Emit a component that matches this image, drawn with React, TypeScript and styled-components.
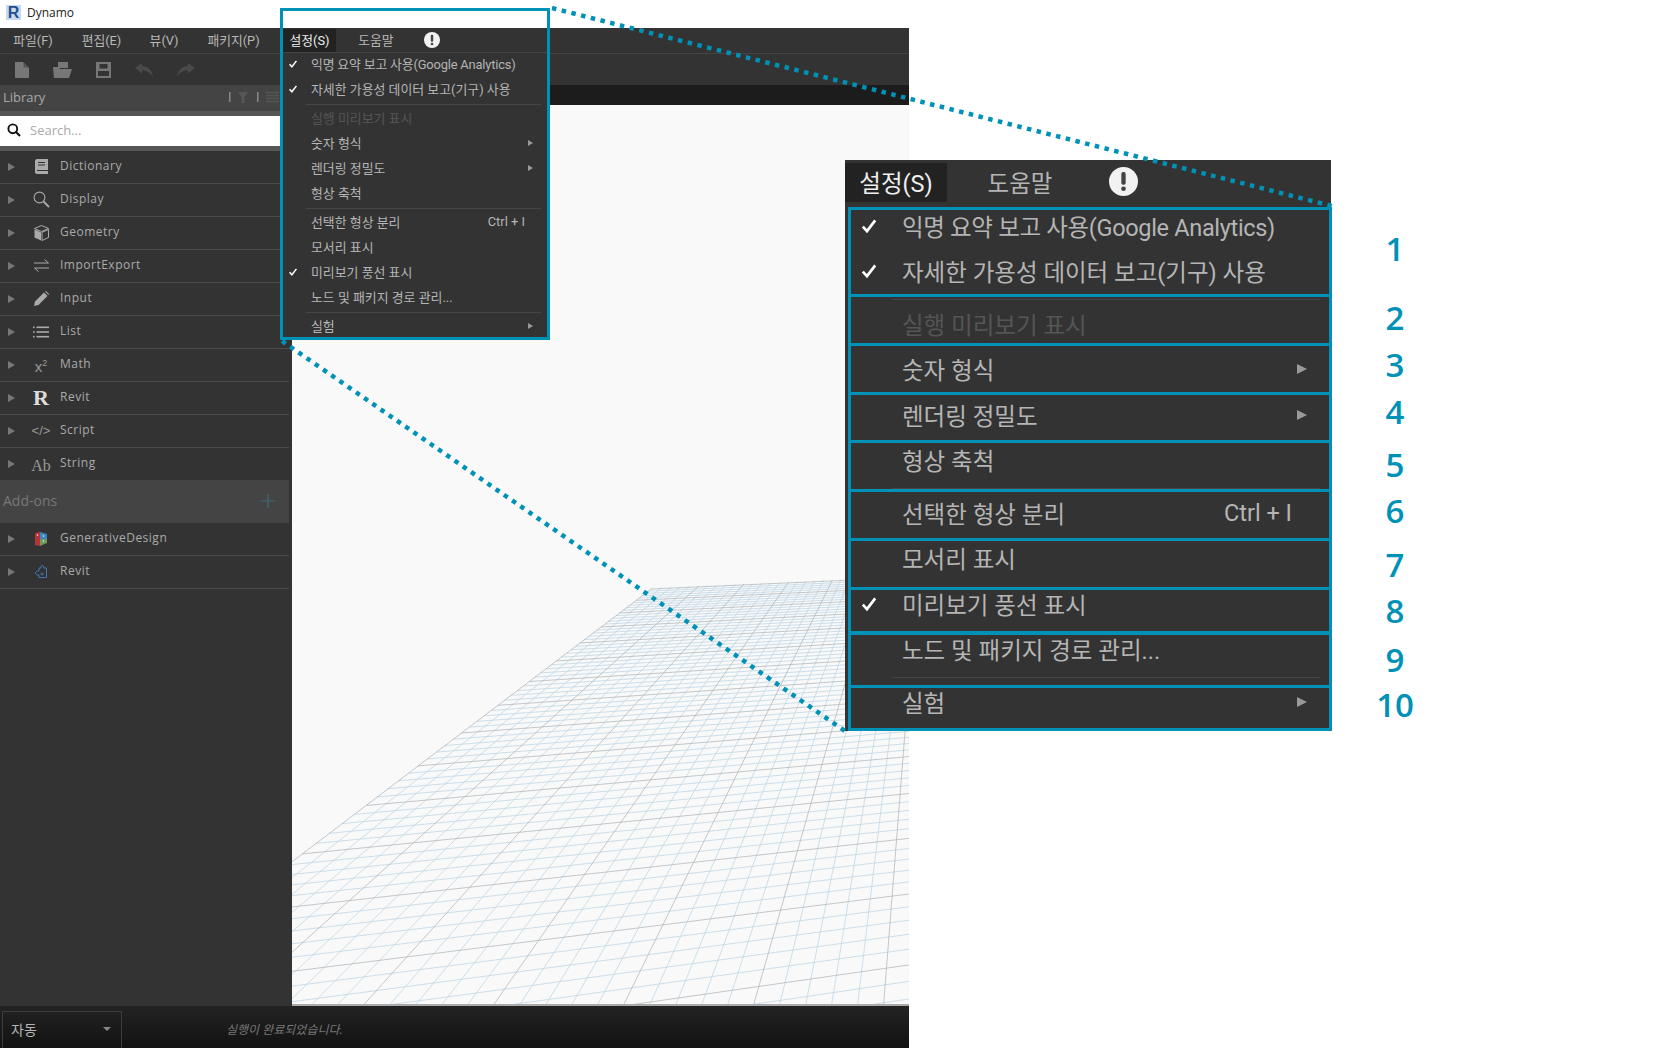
import React from "react";
import styled, { createGlobalStyle, css } from "styled-components";

const UI_FONT = `"Open Sans", "Noto Sans CJK KR", sans-serif`;
const MENU_FONT = `Roboto, "Noto Sans CJK KR", sans-serif`;
const ACCENT = "#0091b7";

const Global = createGlobalStyle`
  html, body { margin: 0; padding: 0; background: #fff; }
  * { box-sizing: border-box; }
`;

const Page = styled.div`
  position: relative;
  width: 1676px;
  height: 1048px;
  overflow: hidden;
  background: #fff;
  font-family: ${UI_FONT};
`;
const AppWindow = styled.div`
  display: flex;
  flex-direction: column;
  width: 909px;
  height: 1048px;
`;
const TitleBar = styled.div`
  display: flex;
  align-items: center;
  gap: 6px;
  height: 28px;
  padding: 0 0 3px 6px;
  background: #fff;
  color: #222;
  font-size: 12px;
`;
const LogoMark = styled.span`
  display: flex;
  align-items: center;
  justify-content: center;
  width: 15px;
  height: 15px;
  background: #c9d8ea;
  color: #1f4f94;
  font: 700 16px/15px "Liberation Sans", sans-serif;
`;
const MenuBar = styled.div`
  display: flex;
  align-items: center;
  height: 26px;
  background: #333;
  border-bottom: 1px solid #444;
  color: #b8b8b8;
  font: 12.8px ${MENU_FONT};
`;
const MenuEntry = styled.span<{ $w: number; $active?: boolean }>`
  display: flex;
  align-items: center;
  justify-content: center;
  width: ${(p) => p.$w}px;
  height: 23px;
  padding-bottom: 2px;
  ${(p) => p.$active && css`background: #222; color: #eee;`}
`;
const Toolbar = styled.div`
  display: flex;
  align-items: center;
  height: 31px;
  padding-left: 15px;
  gap: 24px;
  background: #333;
`;
const Workspace = styled.div`
  display: flex;
  flex: 1;
  min-height: 0;
`;
const Sidebar = styled.aside`
  width: 292px;
  background: #333;
  display: flex;
  flex-direction: column;
  padding-right: 3px;
`;
const LibraryHeader = styled.div`
  display: flex;
  align-items: center;
  height: 26px;
  padding: 0 10px 2px 3px;
  background: #444;
  color: #a8a8a8;
  font-size: 13px;
`;
const LibraryTitle = styled.span`
  flex: 1;
`;
const SearchWell = styled.div`
  padding: 5px 0;
  background: #575757;
`;
const SearchBox = styled.div`
  display: flex;
  align-items: center;
  height: 30px;
  gap: 9px;
  padding: 0 0 2px 7px;
  background: #fff;
  color: #aaa;
  font-size: 13px;
`;
const LibraryRow = styled.div`
  display: flex;
  align-items: center;
  height: 33px;
  padding-bottom: 3px;
  border-bottom: 1px solid #4b4b4b;
  color: #aaa;
  font-size: 12px;
  letter-spacing: 0.5px;
`;
const RowArrow = styled.span`
  width: 0;
  height: 0;
  margin: 2px 0 0 8px;
  border-left: 7px solid #777;
  border-top: 4.5px solid transparent;
  border-bottom: 4.5px solid transparent;
`;
const RowIcon = styled.span`
  display: flex;
  align-items: center;
  justify-content: center;
  width: 20px;
  height: 20px;
  margin: 2px 9px 0 16px;
  color: #aaa;
  letter-spacing: 0;
`;
const MathGlyph = styled.span`
  font: 15px "Liberation Sans", sans-serif;
  color: #999;
  padding-top: 3px;
  sup { font-size: 9px; line-height: 0; }
`;
const RevitGlyph = styled.span`
  font: 700 22px/20px "Liberation Serif", serif;
  color: #ddd;
`;
const ScriptGlyph = styled.span`
  font: 13px "Liberation Sans", sans-serif;
  color: #999;
  white-space: nowrap;
`;
const StringGlyph = styled.span`
  font: 16px "Liberation Serif", serif;
  color: #999;
  padding-top: 4px;
`;
const AddOnsHeader = styled.div`
  display: flex;
  align-items: center;
  justify-content: space-between;
  height: 43px;
  padding: 0 14px 2px 3px;
  margin-top: -1px;
  background: #444;
  color: #777;
  font-size: 14px;
`;
const Stage = styled.main`
  flex: 1;
  display: flex;
  flex-direction: column;
`;
const TabStrip = styled.div`
  height: 20px;
  background: #1c1c1c;
`;
const Viewport = styled.div`
  flex: 1;
  min-height: 0;
  background: #f9f9f9;
  border-bottom: 2px solid #aaa;
`;
const GridSvg = styled.svg`
  display: block;
  width: 100%;
  height: 100%;
`;
const StatusBar = styled.footer`
  display: flex;
  align-items: flex-end;
  height: 42px;
  padding-left: 2px;
  background: linear-gradient(#232323, #121212);
`;
const RunSelect = styled.div`
  display: flex;
  align-items: center;
  justify-content: space-between;
  width: 120px;
  height: 37px;
  padding: 0 10px 3px 8px;
  border: 1px solid #3d3d3d;
  border-bottom: 0;
  color: #b5b5b5;
  font-size: 14px;
`;
const Caret = styled.span`
  width: 0;
  height: 0;
  border-top: 4px solid #888;
  border-left: 4px solid transparent;
  border-right: 4px solid transparent;
`;
const RunStatus = styled.span`
  align-self: center;
  margin: 4px 0 0 104px;
  color: #777;
  font-size: 12px;
  font-style: italic;
`;

/* Floating settings menu, shared by the in-app dropdown and the enlarged call-out */
const DropPanel = styled.div`
  position: absolute;
  left: 283px;
  top: 52px;
  width: 265px;
  background: #333;
  box-shadow: inset 0 1px #444;
`;
const CalloutPanel = styled.div`
  position: absolute;
  left: 845px;
  top: 160px;
  width: 486px;
  height: 571px;
  background: #333;
`;
const CalloutHeader = styled.div`
  display: flex;
  align-items: center;
  height: 45px;
  padding-bottom: 3px;
  color: #b5b5b5;
  font: 23.5px ${MENU_FONT};
`;
const CalloutTab = styled.span<{ $w: number; $active?: boolean }>`
  display: flex;
  align-items: center;
  justify-content: center;
  width: ${(p) => p.$w}px;
  height: 39px;
  margin-top: 3px;
  padding-bottom: 2px;
  ${(p) => p.$active && css`background: #222; color: #eee;`}
`;
const MenuRow = styled.div<{ $large?: boolean; $disabled?: boolean }>`
  display: flex;
  align-items: center;
  height: ${(p) => (p.$large ? 45.5 : 25)}px;
  padding-bottom: ${(p) => (p.$large ? 4 : 2)}px;
  font: ${(p) => (p.$large ? 23.5 : 12.9)}px ${MENU_FONT};
  color: ${(p) => (p.$disabled ? "#555" : "#b5b5b5")};
  white-space: nowrap;
`;
const CheckCell = styled.span<{ $large?: boolean }>`
  display: flex;
  justify-content: center;
  flex: none;
  width: ${(p) => (p.$large ? 48 : 20)}px;
  margin-right: ${(p) => (p.$large ? 9 : 8)}px;
`;
const MenuLabel = styled.span<{ $tight?: boolean }>`
  flex: 1;
  letter-spacing: ${(p) => (p.$tight ? "-0.014em" : "normal")};
`;
const Shortcut = styled.span<{ $large?: boolean }>`
  margin-right: ${(p) => (p.$large ? 39 : 23)}px;
`;
const SubArrow = styled.span<{ $large?: boolean }>`
  width: 0;
  height: 0;
  margin-right: ${(p) => (p.$large ? 24 : 15)}px;
  border-left: ${(p) => (p.$large ? 10 : 5)}px solid #999;
  border-top: ${(p) => (p.$large ? 5.5 : 3)}px solid transparent;
  border-bottom: ${(p) => (p.$large ? 5.5 : 3)}px solid transparent;
`;
const MenuSep = styled.div<{ $large?: boolean }>`
  display: flex;
  align-items: center;
  height: ${(p) => (p.$large ? 7 : 4)}px;
  padding: ${(p) => (p.$large ? "0 11px 0 47px" : "0 7px 0 23px")};
  &::before {
    content: "";
    flex: 1;
    height: 1px;
    background: #464646;
  }
`;
const FrameBox = styled.div<{ $left: number; $top: number; $w: number; $h: number }>`
  position: absolute;
  left: ${(p) => p.$left}px;
  top: ${(p) => p.$top}px;
  width: ${(p) => p.$w}px;
  height: ${(p) => p.$h}px;
  border: 3px solid ${ACCENT};
`;
const CalloutNumber = styled.span<{ $top: number }>`
  position: absolute;
  left: 1345px;
  top: ${(p) => p.$top}px;
  width: 100px;
  text-align: center;
  color: ${ACCENT};
  font: 600 33px/40px "Open Sans", sans-serif;
`;
const Leaders = styled.svg`
  position: absolute;
  inset: 0;
  width: 1676px;
  height: 1048px;
  pointer-events: none;
`;

/* ---------- drawings ---------- */
const CheckMark = ({ size }: { size: number }) => (
  <svg width={size} height={size} viewBox="0 0 16 16" fill="none">
    <path d="M2.5 8.5 L6.2 12.5 L13.5 3" stroke="#fff" strokeWidth="2.4" />
  </svg>
);
const AlertBadge = ({ size }: { size: number }) => (
  <svg width={size} height={size} viewBox="0 0 16 16">
    <circle cx="8" cy="8" r="8" fill="#f2f2f2" />
    <rect x="6.8" y="2.8" width="2.4" height="7" rx="1" fill="#444" />
    <circle cx="8" cy="12" r="1.3" fill="#444" />
  </svg>
);
const ToolIcon = ({ w, children }: { w: number; children: React.ReactNode }) => (
  <svg width={w} height="18" viewBox={`0 0 ${w} 18`}>{children}</svg>
);
const NewIcon = () => (
  <ToolIcon w={14}>
    <path d="M0 1 H8 L14 7 V17 H0 Z" fill="#777" />
    <path d="M8.5 1 L14 6.5 H8.5 Z" fill="#555" />
  </ToolIcon>
);
const OpenIcon = () => (
  <ToolIcon w={19}>
    <path d="M5 1 H15 V7 H5 Z" fill="#777" />
    <path d="M0 6 H6 L7 8 H19 L16 17 H1 Z" fill="#777" />
  </ToolIcon>
);
const SaveIcon = () => (
  <ToolIcon w={15}>
    <path fillRule="evenodd" d="M0 1 H15 V17 H0 Z M3.5 3 V7.5 H11.5 V3 Z M2 10 V15 H13 V10 Z" fill="#777" />
  </ToolIcon>
);
const UndoIcon = ({ flip }: { flip?: boolean }) => (
  <svg width="18" height="16" viewBox="0 0 18 16" style={flip ? { transform: "scaleX(-1)" } : undefined}>
    <path d="M0 6 L7 1 V4 C13 4 17 8 18 15 C15 10 12 8.5 7 8.5 V11.5 Z" fill="#4a4a4a" />
  </svg>
);
const SearchIcon = () => (
  <svg width="14" height="14" viewBox="0 0 14 14" fill="none">
    <circle cx="5.8" cy="5.8" r="4.4" stroke="#111" strokeWidth="1.9" />
    <path d="M9 9 L13 13" stroke="#111" strokeWidth="2.1" />
  </svg>
);
const FilterControls = () => (
  <svg width="50" height="14" viewBox="0 0 50 14">
    <rect x="0" y="2" width="1.5" height="10" fill="#888" />
    <path d="M9 2 H19 L15.5 7 V13 H12.5 V7 Z" fill="#555" />
    <rect x="28" y="2" width="1.5" height="10" fill="#888" />
    <path d="M37 2.5 H50 M37 5.5 H50 M37 8.5 H50 M37 11.5 H50" stroke="#555" strokeWidth="1.4" />
  </svg>
);
const BookIcon = () => (
  <svg width="13" height="15" viewBox="0 0 13 15">
    <path d="M2 0 H13 V15 H2 C0.8 15 0 14 0 13 V2 C0 1 0.8 0 2 0 Z" fill="#aaa" />
    <path d="M3 3.5 H10 M3 6 H10 M2 11.5 H13" stroke="#333" strokeWidth="1.1" />
  </svg>
);
const LensIcon = () => (
  <svg width="17" height="17" viewBox="0 0 17 17" fill="none" stroke="#aaa">
    <circle cx="6.5" cy="6.5" r="5.4" strokeWidth="1.1" />
    <path d="M10.5 10.5 L16 16" strokeWidth="1.8" />
  </svg>
);
const CubeIcon = () => (
  <svg width="15" height="16" viewBox="0 0 15 16">
    <path d="M7.5 0.5 L14.5 3.5 L7.5 6.5 L0.5 3.5 Z" fill="none" stroke="#aaa" />
    <path d="M0.5 4.5 L7 7.3 V15.5 L0.5 12.5 Z" fill="#aaa" />
    <path d="M8 7.3 L14.5 4.5 V12.5 L8 15.5 Z" fill="none" stroke="#aaa" />
  </svg>
);
const SwapIcon = () => (
  <svg width="15" height="13" viewBox="0 0 15 13" fill="none" stroke="#aaa" strokeWidth="1">
    <path d="M0 4 H14.5 M10.5 0.5 L14.5 4" />
    <path d="M15 9 H0.5 M4.5 12.5 L0.5 9" />
  </svg>
);
const PencilIcon = () => (
  <svg width="15" height="15" viewBox="0 0 15 15">
    <path d="M0 15 L1 10.5 L10 1.5 L13.5 5 L4.5 14 Z" fill="#aaa" />
    <path d="M11 0.5 L12 0 L15 3 L14.5 4 Z" fill="#aaa" />
  </svg>
);
const ListIcon = () => (
  <svg width="16" height="12" viewBox="0 0 16 12" fill="#aaa">
    <rect x="0" y="0.5" width="1.6" height="1.6" />
    <rect x="0" y="5.2" width="1.6" height="1.6" />
    <rect x="0" y="9.9" width="1.6" height="1.6" />
    <rect x="3.5" y="0.5" width="12.5" height="1.6" />
    <rect x="3.5" y="5.2" width="12.5" height="1.6" />
    <rect x="3.5" y="9.9" width="12.5" height="1.6" />
  </svg>
);
const GenDesignIcon = () => (
  <svg width="12" height="14" viewBox="0 0 12 14">
    <path d="M0 1 L5 0 V14 L0 13 Z" fill="#b5343a" />
    <path d="M5 0 L12 2 V7 L5 7 Z" fill="#3b87c4" />
    <path d="M5 7 L12 7 V11 L5 14 Z" fill="#6b9a58" />
    <circle cx="2.5" cy="3" r="0.8" fill="#eee" />
    <circle cx="8.5" cy="4" r="0.8" fill="#eee" />
    <circle cx="8.5" cy="9" r="0.8" fill="#eee" />
  </svg>
);
const PuzzleIcon = () => (
  <svg width="12" height="13" viewBox="0 0 12 13" fill="none" stroke="#3f78b5" strokeWidth="1">
    <path d="M4 3 H6 C5.5 1.5 6 0.5 7.2 0.5 C8.4 0.5 9 1.5 8.4 3 H11.5 V12.5 H4 V10 C2.5 10.5 0.5 9.5 0.5 8 C0.5 6.5 2.5 5.5 4 6 Z" />
    <circle cx="7" cy="9" r="1" />
  </svg>
);
const PlusIcon = () => (
  <svg width="14" height="14" viewBox="0 0 14 14">
    <path d="M7 0 V14 M0 7 H14" stroke="#3d6a78" strokeWidth="1.2" />
  </svg>
);

/* ---------- perspective floor ---------- */
const VP1 = { x: 933, y: 375 };
const VP2 = { x: 4817, y: 404 };
const leftPoint = (j: number) => {
  const d = 1 / (0.004673 - 0.000235 * j);
  return { x: VP1.x - 1.317 * d, y: VP1.y + d };
};
const crossLine = (j: number) => {
  const p = leftPoint(j);
  const y = p.y + ((VP2.y - p.y) * (925 - p.x)) / (VP2.x - p.x);
  return `M${p.x.toFixed(1)} ${p.y.toFixed(1)}L925 ${y.toFixed(1)}`;
};
const depthLine = (i: number) => {
  const k = (110 + 129 * i - VP1.x) / 625;
  const d = 200.6 / (1 + 0.0442 * k);
  return `M${(VP1.x + k * d).toFixed(1)} ${(VP1.y + d).toFixed(1)}L${(VP1.x + k * 640).toFixed(1)} 1015`;
};
const buildGrid = () => {
  let major = "";
  let minor = "";
  for (let n = 0; n <= 80; n++) {
    const line = crossLine(n / 5);
    if (n % 5 === 0) major += line;
    else minor += line;
  }
  for (let n = 0; n <= 35; n++) {
    const line = depthLine(n / 5);
    if (n % 5 === 0) major += line;
    else minor += line;
  }
  return { major, minor };
};
const FLOOR = buildGrid();

const FloorGrid = () => (
  <GridSvg viewBox="292 105 617 899" preserveAspectRatio="none">
    <path d={FLOOR.minor} stroke="#c0d7e6" strokeWidth="0.8" fill="none" />
    <path d={FLOOR.major} stroke="#abb2b6" strokeWidth="0.7" fill="none" />
  </GridSvg>
);

/* ---------- data ---------- */
type Item =
  | { sep: true }
  | { sep?: false; label: string; checked?: boolean; disabled?: boolean; sub?: boolean; shortcut?: string; tight?: boolean };

const SETTINGS: Item[] = [
  { label: "익명 요약 보고 사용(Google Analytics)", checked: true, tight: true },
  { label: "자세한 가용성 데이터 보고(기구) 사용", checked: true },
  { sep: true },
  { label: "실행 미리보기 표시", disabled: true },
  { label: "숫자 형식", sub: true },
  { label: "렌더링 정밀도", sub: true },
  { label: "형상 축척" },
  { sep: true },
  { label: "선택한 형상 분리", shortcut: "Ctrl + I" },
  { label: "모서리 표시" },
  { label: "미리보기 풍선 표시", checked: true },
  { label: "노드 및 패키지 경로 관리..." },
  { sep: true },
  { label: "실험", sub: true },
];

const LIBRARY: { name: string; icon: React.ReactNode }[] = [
  { name: "Dictionary", icon: <BookIcon /> },
  { name: "Display", icon: <LensIcon /> },
  { name: "Geometry", icon: <CubeIcon /> },
  { name: "ImportExport", icon: <SwapIcon /> },
  { name: "Input", icon: <PencilIcon /> },
  { name: "List", icon: <ListIcon /> },
  { name: "Math", icon: <MathGlyph>x<sup>2</sup></MathGlyph> },
  { name: "Revit", icon: <RevitGlyph>R</RevitGlyph> },
  { name: "Script", icon: <ScriptGlyph>&lt;/&gt;</ScriptGlyph> },
  { name: "String", icon: <StringGlyph>Ab</StringGlyph> },
];
const ADDONS: { name: string; icon: React.ReactNode }[] = [
  { name: "GenerativeDesign", icon: <GenDesignIcon /> },
  { name: "Revit", icon: <PuzzleIcon /> },
];

const CALLOUTS = [
  { n: 1, top: 207, h: 90, label: 229 },
  { n: 2, top: 294, h: 52, label: 298 },
  { n: 3, top: 343, h: 52, label: 345 },
  { n: 4, top: 392, h: 51, label: 392 },
  { n: 5, top: 440, h: 52, label: 445 },
  { n: 6, top: 489, h: 52, label: 491 },
  { n: 7, top: 538, h: 52, label: 545 },
  { n: 8, top: 587, h: 48, label: 591 },
  { n: 9, top: 631, h: 57, label: 640 },
  { n: 10, top: 685, h: 46, label: 685 },
];

const SettingsRows = ({ large }: { large?: boolean }) => (
  <>
    {SETTINGS.map((item, i) =>
      item.sep ? (
        <MenuSep key={i} $large={large} />
      ) : (
        <MenuRow key={i} $large={large} $disabled={item.disabled}>
          <CheckCell $large={large}>{item.checked && <CheckMark size={large ? 18 : 10} />}</CheckCell>
          <MenuLabel $tight={item.tight}>{item.label}</MenuLabel>
          {item.shortcut && <Shortcut $large={large}>{item.shortcut}</Shortcut>}
          {item.sub && <SubArrow $large={large} />}
        </MenuRow>
      )
    )}
  </>
);

const Row = ({ name, icon }: { name: string; icon: React.ReactNode }) => (
  <LibraryRow>
    <RowArrow />
    <RowIcon>{icon}</RowIcon>
    {name}
  </LibraryRow>
);

export default function App() {
  return (
    <Page>
      <Global />
      <AppWindow>
        <TitleBar>
          <LogoMark>R</LogoMark>
          Dynamo
        </TitleBar>
        <MenuBar>
          <MenuEntry $w={66}>파일(F)</MenuEntry>
          <MenuEntry $w={71}>편집(E)</MenuEntry>
          <MenuEntry $w={54}>뷰(V)</MenuEntry>
          <MenuEntry $w={85}>패키지(P)</MenuEntry>
          <MenuEntry $w={7} />
          <MenuEntry $w={53} $active>설정(S)</MenuEntry>
          <MenuEntry $w={80}>도움말</MenuEntry>
          <MenuEntry $w={32}><AlertBadge size={16} /></MenuEntry>
        </MenuBar>
        <Toolbar>
          <NewIcon />
          <OpenIcon />
          <SaveIcon />
          <UndoIcon />
          <UndoIcon flip />
        </Toolbar>
        <Workspace>
          <Sidebar>
            <LibraryHeader>
              <LibraryTitle>Library</LibraryTitle>
              <FilterControls />
            </LibraryHeader>
            <SearchWell>
              <SearchBox>
                <SearchIcon />
                Search...
              </SearchBox>
            </SearchWell>
            {LIBRARY.map((r) => (
              <Row key={r.name} {...r} />
            ))}
            <AddOnsHeader>
              Add-ons
              <PlusIcon />
            </AddOnsHeader>
            {ADDONS.map((r) => (
              <Row key={r.name} {...r} />
            ))}
          </Sidebar>
          <Stage>
            <TabStrip />
            <Viewport>
              <FloorGrid />
            </Viewport>
          </Stage>
        </Workspace>
        <StatusBar>
          <RunSelect>
            자동
            <Caret />
          </RunSelect>
          <RunStatus>실행이 완료되었습니다.</RunStatus>
        </StatusBar>
      </AppWindow>

      <DropPanel>
        <SettingsRows />
      </DropPanel>
      <FrameBox $left={280} $top={8} $w={270} $h={332} />

      <CalloutPanel>
        <CalloutHeader>
          <CalloutTab $w={102} $active>설정(S)</CalloutTab>
          <CalloutTab $w={146}>도움말</CalloutTab>
          <CalloutTab $w={60}><AlertBadge size={29} /></CalloutTab>
        </CalloutHeader>
        <SettingsRows large />
      </CalloutPanel>
      {CALLOUTS.map((c) => (
        <React.Fragment key={c.n}>
          <FrameBox $left={848} $top={c.top} $w={484} $h={c.h} />
          <CalloutNumber $top={c.label}>{c.n}</CalloutNumber>
        </React.Fragment>
      ))}

      <Leaders viewBox="0 0 1676 1048">
        <path d="M552 8 L1332 206" stroke={ACCENT} strokeWidth="4.5" strokeDasharray="4.5 5.5" fill="none" />
        <path d="M282 341 L845 731" stroke={ACCENT} strokeWidth="4.5" strokeDasharray="4.5 5.5" fill="none" />
      </Leaders>
    </Page>
  );
}
